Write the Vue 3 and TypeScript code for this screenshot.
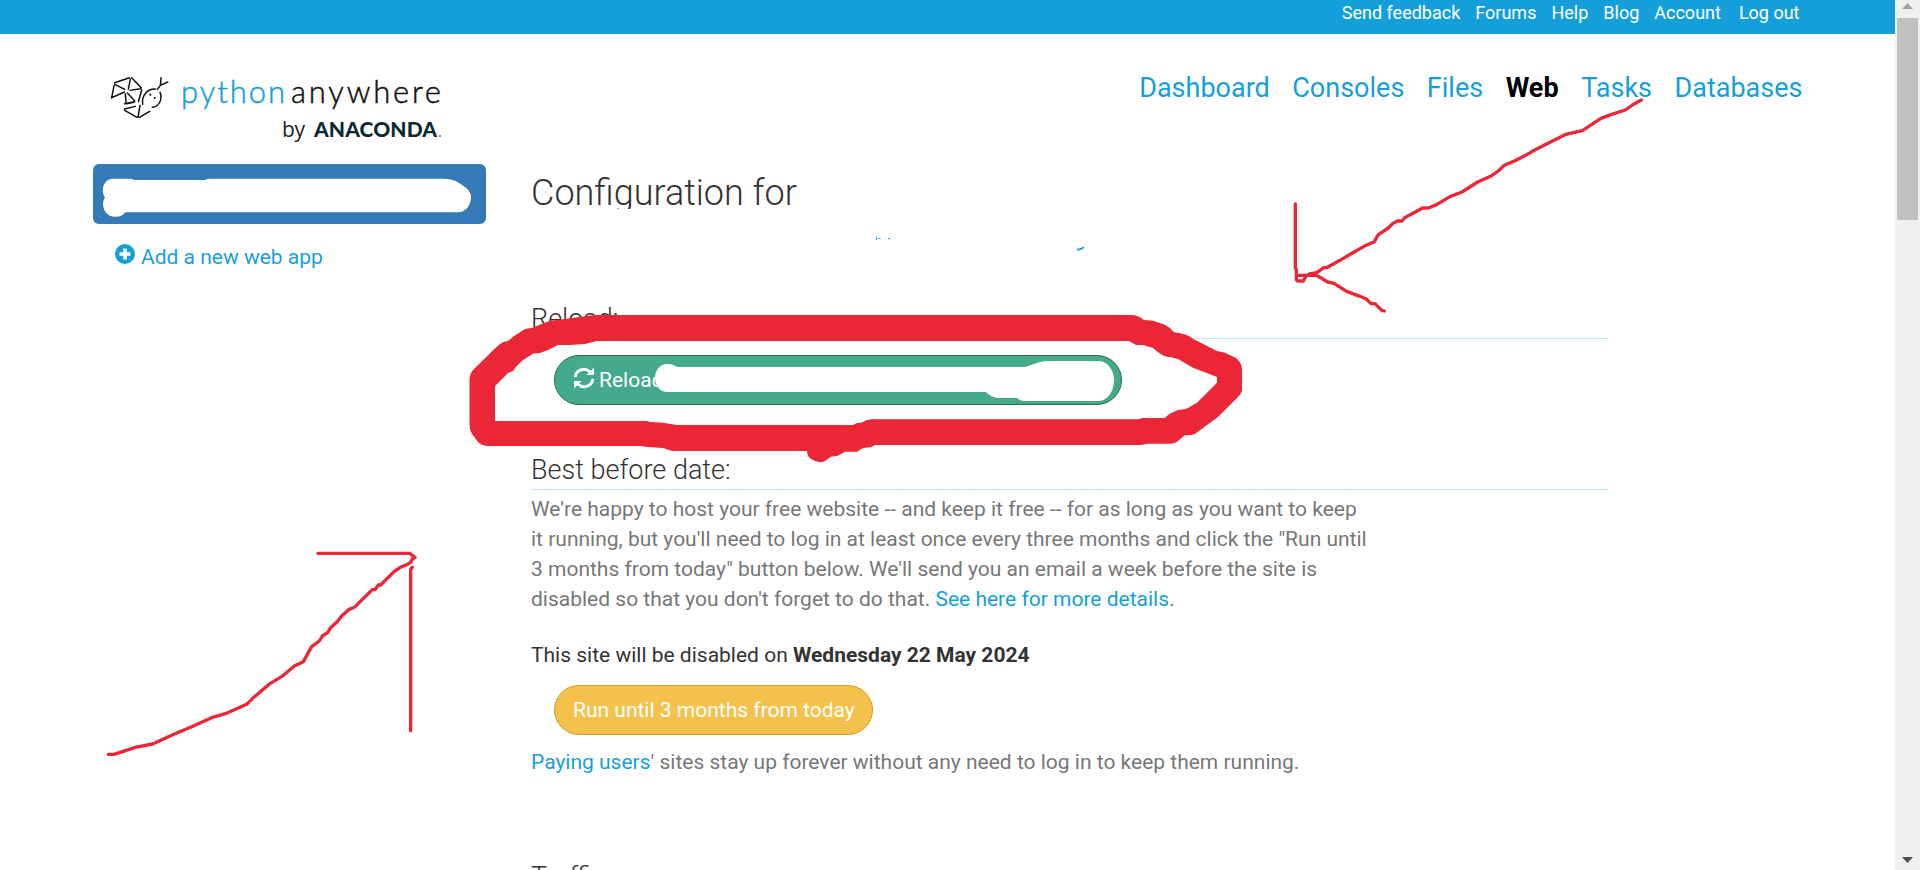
<script setup lang="ts">
interface NavItem {
  label: string
  active?: boolean
}

const topLinks: string[] = ['Send feedback', 'Forums', 'Help', 'Blog', 'Account', 'Log out']

const tabs: NavItem[] = [
  { label: 'Dashboard' },
  { label: 'Consoles' },
  { label: 'Files' },
  { label: 'Web', active: true },
  { label: 'Tasks' },
  { label: 'Databases' },
]
</script>

<template>
  <div class="window">
    <div class="page">
      <nav class="topbar">
        <a v-for="link in topLinks" :key="link" class="top-link">{{ link }}</a>
      </nav>

      <header class="header">
        <svg class="logo" width="350" height="90" viewBox="0 0 350 90">
          <g class="mark" transform="translate(-3.3 13.7) scale(0.33333)">
            <path d="M24 27 68 12M24 32 54 47M22 36 15 72 53 55M71 16 65 46M75 12 104 43M70 50 102 45M56 60 58 86M62 58 84 82M105 49 95 84M60 90 82 86M86 98 53 106M54 90 84 84M54 110 91 131M100 95 94 130M98 131 129 113" />
            <path d="M108 92C104 65 122 45 146 46M160 56C168 76 158 98 137 101M163 12 161 35 183 25M161 35 152 47" />
            <circle cx="131" cy="63" r="3" />
            <circle cx="144" cy="73" r="3" />
          </g>
          <text class="word blue" x="71" y="42.500" textLength="104">python</text>
          <text class="word" x="181" y="42.500" textLength="150">anywhere</text>
          <text class="by" x="172" y="77" textLength="23">by</text>
          <text class="owner" x="204" y="76.500" textLength="123">ANACONDA</text>
          <circle class="dot" cx="330" cy="76" r="1" />
        </svg>
        <nav class="tabs">
          <a v-for="tab in tabs" :key="tab.label" class="tab" :class="{ active: tab.active }">{{ tab.label }}</a>
        </nav>
      </header>

      <div class="columns">
        <aside class="sidebar">
          <div class="app-pill"></div>
          <a class="add-app">
            <svg class="plus" width="20" height="20" viewBox="0 0 20 20">
              <circle cx="10" cy="10" r="10" />
              <path d="M10 4.5v11M4.5 10h11" />
            </svg>
            Add a new web app
          </a>
        </aside>

        <main class="content">
          <h1>Configuration for</h1>
          <section class="reload">
            <h3>Reload:</h3>
            <button class="btn green">
              <svg class="refresh" width="22" height="22" viewBox="0 0 22 22">
                <path class="ring" d="M2.2 10.2A8.6 8.6 0 0 1 16.8 4.8M19.8 11.8A8.6 8.6 0 0 1 5.2 17.2" />
                <path class="head" d="M21 .5V8h-7.5zM1 21.5V14h7.5z" />
              </svg>
              Reload
            </button>
          </section>
          <section>
            <h3>Best before date:</h3>
            <p class="muted">
              We're happy to host your free website -- and keep it free -- for as long as you want to keep<br />
              it running, but you'll need to log in at least once every three months and click the "Run until<br />
              3 months from today" button below. We'll send you an email a week before the site is<br />
              disabled so that you don't forget to do that. <a>See here for more details</a>.
            </p>
            <p class="expiry">This site will be disabled on <b>Wednesday 22 May 2024</b></p>
            <button class="btn yellow">Run until 3 months from today</button>
            <p class="muted paying"><a>Paying users</a>' sites stay up forever without any need to log in to keep them running.</p>
          </section>
          <section class="traffic">
            <h3>Traffic:</h3>
          </section>
        </main>
      </div>
    </div>

    <div class="scrollbar">
      <svg width="25" height="18" viewBox="0 0 25 18"><path fill="#a3a3a3" d="M7 9 12.500 3 18 9z" /></svg>
      <div class="thumb"></div>
      <svg class="down" width="25" height="18" viewBox="0 0 25 18"><path fill="#505050" d="M7 5h11l-5.500 6z" /></svg>
    </div>

    <!-- Brush strokes drawn over the page -->
    <svg class="ink" width="1920" height="870" viewBox="0 0 1920 870">
      <g class="white">
        <path d="M113 178.700H131Q133 180 137 180H205Q207 178.700 210 178.700H445Q451 179 455 180.700 460 183 465 187 471 192 471 197C471 205 466 212.300 458 212.300H125Q123 216.700 115 216.700C105 216.700 100 205 105 197.500 100 190 104 178.700 113 178.700Z" />
        <path d="M667 364Q673 364 677 367H1025L1037 363Q1042 361 1047 361H1098C1107 361 1114 369 1114 380S1108 401 1098 401H1025Q1020 401 1017 398H998Q990 397 986 392H667A12 14 0 0 1 667 364Z" />
        <path d="M525 209H835V228H525Z" />
      </g>
      <path class="trace" d="M1077 249.500Q1082 249.500 1083.500 247" />
      <path class="trace thin" d="M876.500 236.500V240M878.500 238.500H880.500M888 238.300 890.500 239" />
      <path
        class="red"
        fill-rule="evenodd"
        d="M469.500 382Q469 375 473 370L490 353.300Q500 343 504 341.700L508 341 514 336 525 329 533 327.700 539 325 550 320.700 563 319.300 587 316Q592 315 600 315H1131Q1138 315 1144 320L1153 320.700 1165 324.700Q1171 328 1174 332.300 1188 334 1193.300 339L1217 351 1225 352.700 1236 358Q1242 363 1242 370V390Q1242 393 1238 397L1218 417 1206 425.700 1195 434Q1190 436 1185 435L1178 441Q1175 443.700 1171 443.700H1147L1141 445H875L871 447.300 863 448 857 451.700H845L838 455.700 831 456.700 825 461Q819 464 811 459 807 456 807 451H672L663 448 647 447 641 446H488Q482 446 478 442L472 434Q469.500 430 469.500 425ZM495 386V421H647L650 422 663 422.700 677 425H853L857 423 861 422.700 867 420 872 419.300H1138L1143 418H1165Q1169 413 1178 410L1186 409 1197 402.700 1217 382.700V377L1193 367.700 1178 359 1170 357Q1164 358 1153 348L1143 345 1136 345 1129 341H597L585 344 570 345H558L548 350 540 353 533 353.700 523 360 516 366.700 513 371 508 373Z"
      />
      <g class="arrow" transform="translate(1260 90) scale(0.33333)">
        <path d="M1144 30 1122 42 1096 60 1055 73 1023 85 967 122 918 133 870 157 820 182 808 190 765 212 733 226 715 243 695 257 653 276 606 306 570 320 530 344 505 354H488L445 377 433 384 426 393H412L398 401 385 414 355 434 343 455 312 469 272 492 240 511 200 533H192L170 548 148 552 138 558 130 573H113L109 569V540L106 533V342M109 556H170L203 576 222 580 260 604 300 619 319 627 333 641H345L365 661 373 663" />
      </g>
      <g class="arrow" transform="translate(90 530) scale(0.33333)">
        <path d="M55 673H72L136 652 188 642 255 611 305 590 365 563 406 551 470 523 488 505 541 460 575 440 613 408 640 395 665 350 688 333 697 318 714 307 721 294 742 275 755 258 776 239 793 232 847 179H855L865 165H872L913 124 933 111 951 104 962 97 967 87 975 82 959 70H684M967 112 962 118V602" />
      </g>
    </svg>
  </div>
</template>

<style>
body {
  margin: 0;
  overflow: hidden;
}
</style>

<style scoped>
.window {
  position: relative;
  display: flex;
  width: 1920px;
  height: 870px;
  overflow: hidden;
  background: #fff;
  color: #333;
  font: 21px/30px Roboto, sans-serif;
}
.page {
  flex: 1;
  min-width: 0;
}
a {
  color: #159fda;
  text-decoration: none;
}
p,
h1,
h3 {
  margin: 0;
}
.topbar {
  display: flex;
  justify-content: flex-end;
  gap: 15px;
  height: 34px;
  padding-right: 95.500px;
  background: #159fda;
}
.top-link {
  color: #fff;
  font-size: 18px;
  line-height: 26px;
}
.top-link:last-child {
  margin-left: 3px;
}
.header {
  display: flex;
  justify-content: space-between;
  height: 130px;
  padding: 0 92.500px 0 110px;
  box-sizing: border-box;
}
.logo {
  margin-top: 26px;
}
.mark path {
  fill: none;
  stroke: #111;
  stroke-width: 4.500;
  stroke-linecap: round;
}
.word {
  font: 300 31px Lato, sans-serif;
  fill: #111;
  stroke: #111;
  stroke-width: 0.500;
}
.word.blue {
  fill: #159fda;
  stroke: #159fda;
}
.by {
  font: 21px "Open Sans", sans-serif;
  fill: #222;
}
.owner {
  font: 900 21px Lato, sans-serif;
  fill: #0b2a33;
}
.dot {
  fill: #777;
}
.tabs {
  display: flex;
  gap: 22.500px;
  padding-top: 39px;
}
.tab {
  font-size: 27px;
}
.tab.active {
  color: #000;
  font-weight: 700;
}
.columns {
  display: flex;
  gap: 45px;
  padding-left: 93px;
}
.sidebar {
  width: 393px;
}
.app-pill {
  height: 60px;
  border-radius: 6px;
  background: #337ab7;
}
.add-app {
  display: flex;
  gap: 6px;
  margin: 18px 0 0 22px;
}
.plus {
  margin-top: 2px;
  fill: #159fda;
}
.plus path {
  stroke: #fff;
  stroke-width: 3.600;
}
.content {
  width: 1077px;
}
h1 {
  height: 141px;
  padding-top: 9px;
  box-sizing: border-box;
  font-size: 36px;
  font-weight: 300;
  line-height: 40px;
}
h3 {
  height: 33px;
  border-bottom: 1px solid #b9eafc;
  font-size: 27px;
  font-weight: 300;
  line-height: 29px;
}
.reload {
  height: 151px;
}
.btn {
  display: flex;
  align-items: center;
  gap: 4px;
  height: 50px;
  margin-left: 23px;
  padding: 0 18px;
  border: 1px solid;
  border-radius: 25px;
  color: #fff;
  font: inherit;
}
.green {
  width: 568px;
  margin-top: 16px;
  border-color: #2a6a56;
  background: #44aa8b;
}
.refresh {
  margin-top: -4px;
}
.ring {
  fill: none;
  stroke: #fff;
  stroke-width: 3;
}
.head {
  fill: #fff;
}
.yellow {
  width: 319px;
  margin-top: 15px;
  border-color: #d19d20;
  background: #f4c14d;
  white-space: nowrap;
}
.muted {
  padding-top: 4px;
  color: #777;
  white-space: nowrap;
}
.expiry {
  margin-top: 26px;
}
.paying {
  padding-top: 12px;
}
.traffic {
  margin-top: 86px;
}
.scrollbar {
  display: flex;
  flex-direction: column;
  width: 25px;
  background: #f0f0f0;
}
.thumb {
  height: 202px;
  margin: 0 2px;
  background: #c1c1c1;
}
.down {
  margin-top: auto;
}
.ink {
  position: absolute;
  top: 0;
  left: 0;
  pointer-events: none;
}
.white {
  fill: #fff;
}
.red {
  fill: #eb2737;
}
.arrow {
  fill: none;
  stroke: #eb2737;
  stroke-width: 10;
  stroke-linecap: round;
  stroke-linejoin: round;
}
.trace {
  fill: none;
  stroke: #159fda;
  stroke-width: 2;
}
.trace.thin {
  stroke-width: 1;
}
</style>
